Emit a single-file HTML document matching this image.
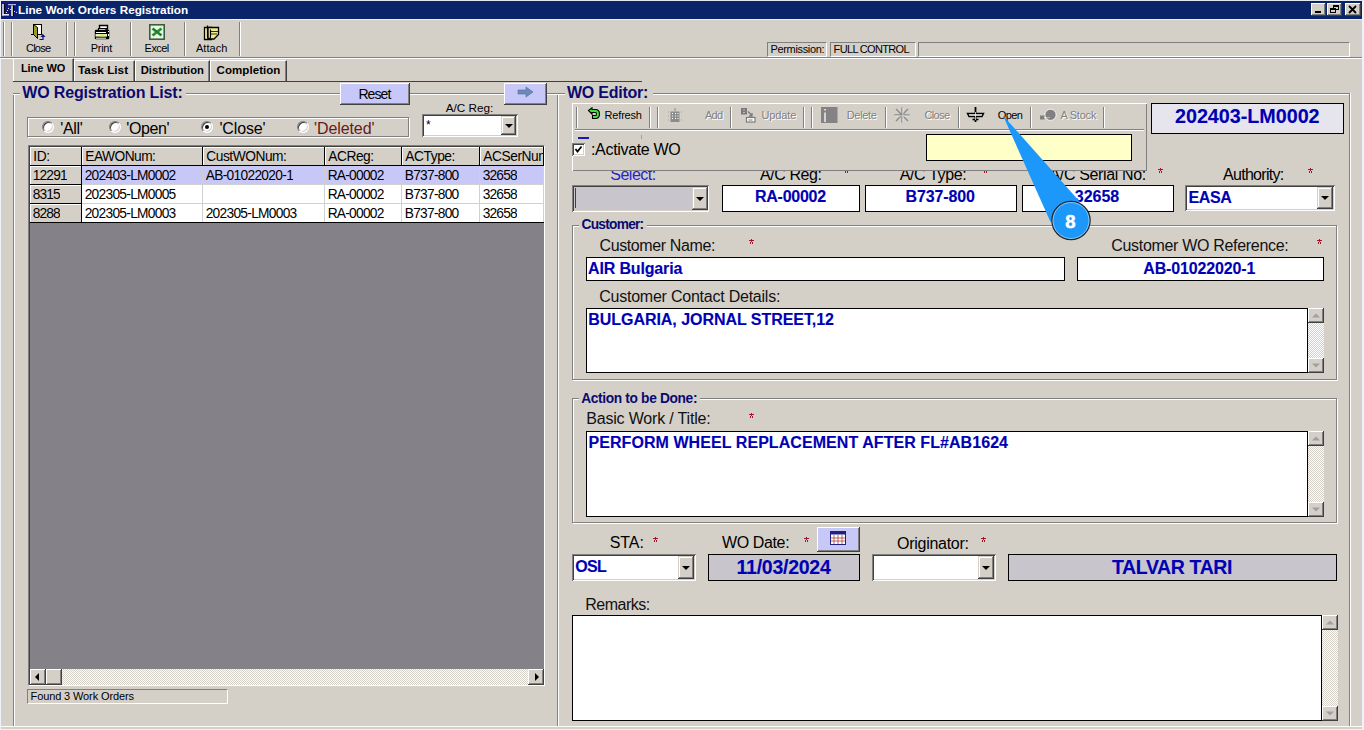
<!DOCTYPE html>
<html><head><meta charset="utf-8"><style>
*{box-sizing:border-box;margin:0;padding:0}
html,body{width:1364px;height:730px;overflow:hidden;background:#D4D0C8;font-family:"Liberation Sans",sans-serif;font-size:12px;color:#000;position:relative}
.a{position:absolute}
.t{position:absolute;white-space:nowrap;line-height:1}
.sk1{border-top:1px solid #808080;border-left:1px solid #808080;border-bottom:1px solid #fff;border-right:1px solid #fff}
.sk2{box-shadow:inset 1px 1px #808080,inset -1px -1px #fff,inset 2px 2px #404040,inset -2px -2px #D4D0C8}
.rz{box-shadow:inset -1px -1px #404040,inset 1px 1px #fff,inset -2px -2px #808080}
.rz1{box-shadow:inset -1px -1px #808080,inset 1px 1px #fff}
.flat{border:1px solid #000;background:#fff}
.grp{position:absolute;border:1px solid #808080;box-shadow:1px 1px #fff,inset 1px 1px #fff}
.vs{position:absolute;width:2px;border-left:1px solid #808080;border-right:1px solid #fff}
.hs{position:absolute;height:2px;border-top:1px solid #808080;border-bottom:1px solid #fff}
.dd{position:absolute;background:#D4D0C8;box-shadow:inset -1px -1px #404040,inset 1px 1px #D4D0C8,inset -2px -2px #808080,inset 2px 2px #fff}
.dd:after{content:"";position:absolute;left:50%;top:50%;margin-left:-4px;margin-top:-2px;border-left:4px solid transparent;border-right:4px solid transparent;border-top:4px solid #000}
.gh{position:absolute;background:#D4D0C8;box-shadow:inset -1px -1px #404040,inset 1px 1px #fff}
.gc{position:absolute;background:#fff;border-right:1px solid #C8C8C8;border-bottom:1px solid #C8C8C8}
.trk{background-color:#F0EEEA;background-image:repeating-conic-gradient(#D4D0C8 0 25%,#fff 0 50%);background-size:2px 2px}

</style></head><body>
<div class="a " style="left:0px;top:0px;width:1364px;height:730px;background:#D4D0C8"></div>
<div class="a " style="left:0px;top:0px;width:1px;height:730px;background:#EEF2FA"></div>
<div class="a " style="left:1362px;top:0px;width:2px;height:730px;background:#EEF2FA"></div>
<div class="a " style="left:1px;top:726px;width:1361px;height:1px;background:#FCFCF8"></div>
<div class="a " style="left:0px;top:729px;width:1364px;height:1px;background:#EEF2FA"></div>
<div class="a " style="left:0px;top:0px;width:1364px;height:1px;background:#E4E8F0"></div>
<div class="a " style="left:1px;top:1px;width:1361px;height:18px;background:#0A246A"></div>
<div class="a " style="left:1px;top:19px;width:1361px;height:1px;background:#F0F0F0"></div>
<div class="a " style="left:1311px;top:3px;width:15px;height:13px;background:#D4D0C8;box-shadow:inset -1px -1px #404040,inset 1px 1px #fff,inset -2px -2px #808080"></div>
<div class="a " style="left:1327px;top:3px;width:15px;height:13px;background:#D4D0C8;box-shadow:inset -1px -1px #404040,inset 1px 1px #fff,inset -2px -2px #808080"></div>
<div class="a " style="left:1345px;top:3px;width:16px;height:13px;background:#D4D0C8;box-shadow:inset -1px -1px #404040,inset 1px 1px #fff,inset -2px -2px #808080"></div>
<div class="a " style="left:1315px;top:11px;width:6px;height:2px;background:#000"></div>
<div class="a " style="left:1333px;top:5px;width:6px;height:5px;border:1px solid #000;border-top-width:2px"></div>
<div class="a " style="left:1330px;top:8px;width:6px;height:5px;border:1px solid #000;border-top-width:2px;background:#D4D0C8"></div>
<svg class="a" style="left:1348px;top:5px" width="10" height="9"><path d="M1 1L8 8M8 1L1 8" stroke="#000" stroke-width="1.8"/></svg>
<svg class="a" style="left:0;top:0" width="18" height="19"><rect x="1" y="1" width="17" height="17.5" fill="#0E1C80"/><rect x="2.2" y="4" width="1.7" height="11.5" fill="#E8E4F4"/><rect x="2.2" y="14" width="6.8" height="1.6" fill="#E8E4F4"/><rect x="3.9" y="4" width="0.9" height="10" fill="#000"/><rect x="8" y="4" width="8" height="1.2" fill="#B0B4E8"/><rect x="11" y="5.5" width="2" height="10.5" fill="#C8C090"/><rect x="13" y="5.5" width="0.9" height="10.5" fill="#000"/><g fill="#fff"><circle cx="8.5" cy="8.3" r="0.6"/><circle cx="7.5" cy="10.5" r="0.6"/><circle cx="6.5" cy="12.5" r="0.6"/><circle cx="10.5" cy="9.5" r="0.6"/><circle cx="14.5" cy="11.5" r="0.6"/><circle cx="16.5" cy="12.3" r="0.6"/></g></svg>
<div class="vs" style="left:3px;top:22px;height:34px;border-left-color:#808080"></div>
<div class="vs" style="left:11px;top:22px;height:34px;border-left-color:#808080"></div>
<div class="vs" style="left:66px;top:22px;height:34px;border-left-color:#808080"></div>
<div class="vs" style="left:74px;top:22px;height:34px;border-left-color:#808080"></div>
<div class="vs" style="left:130px;top:22px;height:34px;border-left-color:#808080"></div>
<div class="vs" style="left:184px;top:22px;height:34px;border-left-color:#808080"></div>
<div class="vs" style="left:239px;top:22px;height:34px;border-left-color:#808080"></div>
<div class="a " style="left:0px;top:57px;width:1362px;height:1px;background:#808080"></div>
<div class="a " style="left:0px;top:58px;width:1362px;height:1px;background:#fff"></div>
<svg class="a" style="left:28px;top:20px" width="30" height="22"><rect x="5.5" y="4.5" width="8" height="10" fill="#fff" stroke="#000"/><path d="M5.5 4.5L9.5 7.5V18.5L5.5 14.5Z" fill="#9A9A2A" stroke="#000"/><path d="M3 14.5H6M9 14.5H14.5" stroke="#000"/><path d="M12.5 17L15 14L17.5 17Z" fill="#10108A"/><path d="M15 16.5V19.5H11.5" stroke="#10108A" stroke-width="1.2" fill="none"/></svg>
<svg class="a" style="left:88px;top:20px" width="30" height="22"><path d="M11.5 5.5H19.5V9H11.5Z" fill="#fff" stroke="#000" stroke-width="1.4"/><path d="M10.5 8.5H18.5L17.5 11H10.5Z" fill="#fff" stroke="#000" stroke-width="1.2"/><rect x="6.8" y="9.8" width="14.5" height="9.5" rx="1.2" fill="#000"/><path d="M8 12.5H18M8 18.2H18" stroke="#fff" stroke-width="1"/><rect x="7.5" y="14" width="11.5" height="2.6" fill="#E8F0C0"/><rect x="12" y="14.4" width="5" height="2" fill="#D8F040"/><rect x="20" y="11" width="1" height="1" fill="#fff"/><rect x="20" y="14" width="1" height="2" fill="#fff"/></svg>
<svg class="a" style="left:142px;top:20px" width="30" height="22"><rect x="7.8" y="4.8" width="14.4" height="14.4" fill="#E4F8E4" stroke="#3C5C3C" stroke-width="1.6"/><path d="M10.5 8.5L19.5 15.5M19.5 8.5L10.5 15.5" stroke="#2A8A3A" stroke-width="2.8"/><path d="M11 8.5L19 15" stroke="#1A6A2A" stroke-width="1"/></svg>
<svg class="a" style="left:197px;top:20px" width="30" height="22"><path d="M7.5 7.5H14.5V19.5H7.5Z" fill="#F4F0A8" stroke="#000" stroke-width="1.3"/><path d="M11 7.5H21.5V14.5L17 19H11Z" fill="#F0EC90" stroke="#000" stroke-width="1.3"/><path d="M14 11.5H21M14 14H20" stroke="#000" stroke-width="0.8"/><path d="M10.5 5.5V17Q10.5 18.5 12 18.5Q13.5 18.5 13.5 17V9.5" stroke="#000" stroke-width="1.2" fill="none"/></svg>
<div class="a sk1" style="left:767px;top:42px;width:60px;height:15px;"></div>
<div class="a sk1" style="left:830px;top:42px;width:86px;height:15px;"></div>
<div class="a sk1" style="left:918px;top:42px;width:432px;height:15px;"></div>
<div class="a " style="left:74px;top:60px;width:61px;height:21px;border-top:1px solid #fff;border-left:1px solid #fff;border-right:1px solid #404040;box-shadow:inset -1px 0 #808080"></div>
<div class="a " style="left:135px;top:60px;width:75px;height:21px;border-top:1px solid #fff;border-left:1px solid #fff;border-right:1px solid #404040;box-shadow:inset -1px 0 #808080"></div>
<div class="a " style="left:210px;top:60px;width:77px;height:21px;border-top:1px solid #fff;border-left:1px solid #fff;border-right:1px solid #404040;box-shadow:inset -1px 0 #808080"></div>
<div class="a " style="left:13px;top:58px;width:61px;height:24px;background:#D4D0C8;border-top:1px solid #fff;border-left:1px solid #fff;border-right:1px solid #404040;box-shadow:inset -1px 0 #808080"></div>
<div class="a " style="left:13px;top:81px;width:629px;height:1px;background:#404040"></div>
<div class="a " style="left:13px;top:93px;width:2px;height:633px;border-left:1px solid #808080;border-right:1px solid #fff"></div>
<div class="a " style="left:13px;top:93px;width:545px;height:2px;border-top:1px solid #808080;border-bottom:1px solid #fff"></div>
<div class="a " style="left:557px;top:93px;width:2px;height:633px;border-left:1px solid #808080;border-right:1px solid #fff"></div>
<div class="a " style="left:20px;top:84px;width:166px;height:16px;background:#D4D0C8"></div>
<div class="a " style="left:340px;top:83px;width:70px;height:22px;background:#C8C8F8;box-shadow:inset -1px -1px #404040,inset 1px 1px #fff,inset -2px -2px #808080"></div>
<div class="a " style="left:504px;top:83px;width:43px;height:22px;background:#C8C8F8;box-shadow:inset -1px -1px #404040,inset 1px 1px #fff,inset -2px -2px #808080"></div>
<svg class="a" style="left:517px;top:86px" width="18" height="12"><path d="M1 4H9V1L16 6L9 11V8H1Z" fill="#6A8AB8" stroke="#50709A" stroke-width="0.6"/></svg>
<div class="a " style="left:27px;top:117px;width:383px;height:21px;border-top:1px solid #808080;border-left:1px solid #808080;border-bottom:1px solid #fff;border-right:1px solid #fff;box-shadow:inset -1px -1px #808080,inset 1px 1px #fff"></div>
<div class="a" style="left:42px;top:121px;width:12px;height:12px;border-radius:50%;background:#fff;border-top:1px solid #808080;border-left:1px solid #808080;border-bottom:1px solid #fff;border-right:1px solid #fff;box-shadow:inset 1px 1px #404040,inset -1px -1px #D4D0C8"></div>
<div class="a" style="left:108.7px;top:121px;width:12px;height:12px;border-radius:50%;background:#fff;border-top:1px solid #808080;border-left:1px solid #808080;border-bottom:1px solid #fff;border-right:1px solid #fff;box-shadow:inset 1px 1px #404040,inset -1px -1px #D4D0C8"></div>
<div class="a" style="left:201.3px;top:121px;width:12px;height:12px;border-radius:50%;background:#fff;border-top:1px solid #808080;border-left:1px solid #808080;border-bottom:1px solid #fff;border-right:1px solid #fff;box-shadow:inset 1px 1px #404040,inset -1px -1px #D4D0C8"></div>
<div class="a" style="left:296.5px;top:121px;width:12px;height:12px;border-radius:50%;background:#fff;border-top:1px solid #808080;border-left:1px solid #808080;border-bottom:1px solid #fff;border-right:1px solid #fff;box-shadow:inset 1px 1px #404040,inset -1px -1px #D4D0C8"></div>
<div class="a" style="left:205.3px;top:125px;width:4px;height:4px;border-radius:50%;background:#000"></div>
<div class="a " style="left:422px;top:114px;width:96px;height:23px;background:#fff;box-shadow:inset 1px 1px #808080,inset -1px -1px #fff,inset 2px 2px #404040,inset -2px -2px #D4D0C8"></div>
<div class="dd" style="left:501px;top:116px;width:15px;height:19px"></div>
<div class="a " style="left:28px;top:145px;width:517px;height:541px;background:#848288;border-top:1px solid #808080;border-left:1px solid #808080;border-right:1px solid #fff;border-bottom:1px solid #fff;box-shadow:inset 1px 1px #404040"></div>
<div class="a " style="left:30px;top:147px;width:52px;height:19px;background:#D4D0C8;border-bottom:1px solid #000;border-right:1px solid #000;box-shadow:inset 1px 1px #fff"></div>
<div class="a " style="left:82px;top:147px;width:121px;height:19px;background:#D4D0C8;border-bottom:1px solid #000;border-right:1px solid #000;box-shadow:inset 1px 1px #fff"></div>
<div class="a " style="left:203px;top:147px;width:122px;height:19px;background:#D4D0C8;border-bottom:1px solid #000;border-right:1px solid #000;box-shadow:inset 1px 1px #fff"></div>
<div class="a " style="left:325px;top:147px;width:77px;height:19px;background:#D4D0C8;border-bottom:1px solid #000;border-right:1px solid #000;box-shadow:inset 1px 1px #fff"></div>
<div class="a " style="left:402px;top:147px;width:78px;height:19px;background:#D4D0C8;border-bottom:1px solid #000;border-right:1px solid #000;box-shadow:inset 1px 1px #fff"></div>
<div class="a " style="left:480px;top:147px;width:64px;height:19px;background:#D4D0C8;border-bottom:1px solid #000;border-right:1px solid #000;box-shadow:inset 1px 1px #fff"></div>
<div class="a " style="left:30px;top:166px;width:52px;height:19px;background:#D4D0C8;border-bottom:1px solid #000;border-right:1px solid #000;box-shadow:inset 1px 1px #fff"></div>
<div class="a " style="left:82px;top:166px;width:121px;height:19px;background:#C8C8F8;border-right:1px solid #D0D0D0;border-bottom:1px solid #D0D0D0"></div>
<div class="a " style="left:203px;top:166px;width:122px;height:19px;background:#C8C8F8;border-right:1px solid #D0D0D0;border-bottom:1px solid #D0D0D0"></div>
<div class="a " style="left:325px;top:166px;width:77px;height:19px;background:#C8C8F8;border-right:1px solid #D0D0D0;border-bottom:1px solid #D0D0D0"></div>
<div class="a " style="left:402px;top:166px;width:78px;height:19px;background:#C8C8F8;border-right:1px solid #D0D0D0;border-bottom:1px solid #D0D0D0"></div>
<div class="a " style="left:480px;top:166px;width:64px;height:19px;background:#C8C8F8;border-right:1px solid #D0D0D0;border-bottom:1px solid #D0D0D0"></div>
<div class="a " style="left:30px;top:185px;width:52px;height:19px;background:#D4D0C8;border-bottom:1px solid #000;border-right:1px solid #000;box-shadow:inset 1px 1px #fff"></div>
<div class="a " style="left:82px;top:185px;width:121px;height:19px;background:#fff;border-right:1px solid #D0D0D0;border-bottom:1px solid #D0D0D0"></div>
<div class="a " style="left:203px;top:185px;width:122px;height:19px;background:#fff;border-right:1px solid #D0D0D0;border-bottom:1px solid #D0D0D0"></div>
<div class="a " style="left:325px;top:185px;width:77px;height:19px;background:#fff;border-right:1px solid #D0D0D0;border-bottom:1px solid #D0D0D0"></div>
<div class="a " style="left:402px;top:185px;width:78px;height:19px;background:#fff;border-right:1px solid #D0D0D0;border-bottom:1px solid #D0D0D0"></div>
<div class="a " style="left:480px;top:185px;width:64px;height:19px;background:#fff;border-right:1px solid #D0D0D0;border-bottom:1px solid #D0D0D0"></div>
<div class="a " style="left:30px;top:204px;width:52px;height:19px;background:#D4D0C8;border-bottom:1px solid #000;border-right:1px solid #000;box-shadow:inset 1px 1px #fff"></div>
<div class="a " style="left:82px;top:204px;width:121px;height:19px;background:#fff;border-right:1px solid #D0D0D0;border-bottom:1px solid #D0D0D0"></div>
<div class="a " style="left:203px;top:204px;width:122px;height:19px;background:#fff;border-right:1px solid #D0D0D0;border-bottom:1px solid #D0D0D0"></div>
<div class="a " style="left:325px;top:204px;width:77px;height:19px;background:#fff;border-right:1px solid #D0D0D0;border-bottom:1px solid #D0D0D0"></div>
<div class="a " style="left:402px;top:204px;width:78px;height:19px;background:#fff;border-right:1px solid #D0D0D0;border-bottom:1px solid #D0D0D0"></div>
<div class="a " style="left:480px;top:204px;width:64px;height:19px;background:#fff;border-right:1px solid #D0D0D0;border-bottom:1px solid #D0D0D0"></div>
<div class="a " style="left:30px;top:222px;width:514px;height:1px;background:#000"></div>
<div class="a trk" style="left:30px;top:669px;width:514px;height:16px;"></div>
<div class="a " style="left:30px;top:669px;width:16px;height:16px;background:#D4D0C8;box-shadow:inset -1px -1px #404040,inset 1px 1px #fff,inset -2px -2px #808080"></div>
<div class="a " style="left:46px;top:669px;width:16px;height:16px;background:#D4D0C8;box-shadow:inset -1px -1px #404040,inset 1px 1px #fff,inset -2px -2px #808080"></div>
<div class="a " style="left:528px;top:669px;width:16px;height:16px;background:#D4D0C8;box-shadow:inset -1px -1px #404040,inset 1px 1px #fff,inset -2px -2px #808080"></div>
<svg class="a" style="left:34px;top:673px" width="8" height="8"><path d="M5 0L1 4L5 8Z" fill="#000"/></svg>
<svg class="a" style="left:533px;top:673px" width="8" height="8"><path d="M2 0L6 4L2 8Z" fill="#000"/></svg>
<div class="a sk1" style="left:27px;top:689px;width:201px;height:15px;"></div>
<div class="a " style="left:557px;top:93px;width:793px;height:2px;border-top:1px solid #808080;border-bottom:1px solid #fff"></div>
<div class="a " style="left:1349px;top:93px;width:2px;height:633px;border-left:1px solid #808080;border-right:1px solid #fff"></div>
<div class="a " style="left:565px;top:84px;width:88px;height:16px;background:#D4D0C8"></div>
<svg class="a" style="left:844px;top:168px" width="5" height="5" shape-rendering="crispEdges"><g fill="#A8142A"><rect x="2" y="0" width="1" height="3"/><rect x="0" y="1" width="5" height="1"/><rect x="1" y="3" width="1" height="2"/><rect x="3" y="3" width="1" height="2"/></g></svg>
<svg class="a" style="left:983px;top:168px" width="5" height="5" shape-rendering="crispEdges"><g fill="#A8142A"><rect x="2" y="0" width="1" height="3"/><rect x="0" y="1" width="5" height="1"/><rect x="1" y="3" width="1" height="2"/><rect x="3" y="3" width="1" height="2"/></g></svg>
<svg class="a" style="left:1158px;top:168px" width="5" height="5" shape-rendering="crispEdges"><g fill="#A8142A"><rect x="2" y="0" width="1" height="3"/><rect x="0" y="1" width="5" height="1"/><rect x="1" y="3" width="1" height="2"/><rect x="3" y="3" width="1" height="2"/></g></svg>
<svg class="a" style="left:1308px;top:168px" width="5" height="5" shape-rendering="crispEdges"><g fill="#A8142A"><rect x="2" y="0" width="1" height="3"/><rect x="0" y="1" width="5" height="1"/><rect x="1" y="3" width="1" height="2"/><rect x="3" y="3" width="1" height="2"/></g></svg>
<div class="a " style="left:572px;top:103px;width:575px;height:68px;background:#D4D0C8;box-shadow:inset 1px 1px #fff,inset -1px -1px #808080"></div>
<div class="a " style="left:575px;top:129px;width:569px;height:2px;border-top:1px solid #808080;border-bottom:1px solid #fff"></div>
<div class="a " style="left:641px;top:135px;width:1px;height:4px;background:#A0A0A0"></div>
<div class="vs" style="left:576px;top:107px;height:21px"></div>
<div class="vs" style="left:649px;top:107px;height:21px"></div>
<div class="vs" style="left:657px;top:107px;height:21px"></div>
<div class="vs" style="left:730px;top:107px;height:21px"></div>
<div class="vs" style="left:803px;top:107px;height:21px"></div>
<div class="vs" style="left:811px;top:107px;height:21px"></div>
<div class="vs" style="left:885px;top:107px;height:21px"></div>
<div class="vs" style="left:958px;top:107px;height:21px"></div>
<div class="vs" style="left:1030px;top:107px;height:21px"></div>
<div class="vs" style="left:1103px;top:107px;height:21px"></div>
<svg class="a" style="left:586px;top:107px" width="16" height="16"><path d="M2.5 3.5L6 0.8V2.5H9.5Q13.5 2.5 13.5 7Q13.5 11.5 9.5 11.5H6.5V8.5H9.5Q10.5 8.5 10.5 7Q10.5 5.5 9.5 5.5H6V7.2Z" fill="#40E040" stroke="#000" stroke-width="1.1"/></svg>
<svg class="a" style="left:667px;top:107px" width="16" height="17"><path d="M3.5 4.5H12.5V15H3.5Z" fill="#8C8C8C"/><path d="M8 1V4" stroke="#8C8C8C"/><path d="M5 6.5H6M8 6.5H9M10.5 6.5H11.5M5 9H6M8 9H9M10.5 9H11.5M5 11.5H6M8 11.5H9M10.5 11.5H11.5" stroke="#fff" stroke-width="1"/><path d="M1 5H2M1 9H2M1 13H2M14 5H15M14 13H15" stroke="#A0A0A0"/></svg>
<svg class="a" style="left:740px;top:107px" width="18" height="17"><rect x="1" y="1" width="6" height="6.5" fill="#7A7A7A"/><path d="M3.5 3H4.5M3.5 5.5H4.5" stroke="#fff"/><path d="M8 4.5L12 8.5M12 6V9H9" stroke="#7A7A7A" stroke-width="1.3" fill="none"/><rect x="6.5" y="10.5" width="8.5" height="4.5" fill="#fff" stroke="#7A7A7A" stroke-width="1.2"/><path d="M8.5 13H12.5" stroke="#7A7A7A"/></svg>
<svg class="a" style="left:820px;top:107px" width="18" height="17"><rect x="1" y="0" width="16.5" height="16" fill="#848284"/><path d="M5 5.5V15" stroke="#fff" stroke-width="1.3"/><rect x="4.4" y="2" width="1.4" height="1.5" fill="#fff"/></svg>
<svg class="a" style="left:893px;top:106px" width="18" height="18"><path d="M9 1.5V16.5M1.5 9H16.5M3 3L15 15M15 3L3 15" stroke="#8A8A8A" stroke-width="1.4"/><path d="M9.9 2V16M2 9.9H16" stroke="#fff" stroke-width="0.6"/></svg>
<svg class="a" style="left:966px;top:106px" width="19" height="18"><path d="M9.5 1V16" stroke="#000" stroke-width="1.8"/><path d="M1.5 7.5H17.5L16 10.5H3Z" fill="#fff" stroke="#000" stroke-width="1.4"/><path d="M6.5 13.5H12.5" stroke="#000" stroke-width="1.6"/><path d="M9.5 6V14" stroke="#fff" stroke-width="0.7"/></svg>
<svg class="a" style="left:1039px;top:107px" width="19" height="15"><circle cx="11.5" cy="7.8" r="5.6" fill="#808080" stroke="#fff" stroke-width="0.8"/><rect x="1" y="8.5" width="4.5" height="4" fill="#808080"/><path d="M5.5 10.5H11" stroke="#fff" stroke-width="0.9" stroke-dasharray="1 1"/></svg>
<div class="a " style="left:578px;top:137px;width:11px;height:2px;background:#1A1AB0"></div>
<div class="a " style="left:572px;top:143px;width:13px;height:13px;background:#fff;box-shadow:inset 1px 1px #808080,inset -1px -1px #fff,inset 2px 2px #404040,inset -2px -2px #D4D0C8"></div>
<svg class="a" style="left:574px;top:145px" width="9" height="9"><path d="M1.5 4L3.5 6.5L7.5 1.5" stroke="#000" stroke-width="1.8" fill="none"/></svg>
<div class="a " style="left:926px;top:134px;width:206px;height:27px;background:#FFFFC8;border:1px solid #000"></div>
<div class="a " style="left:1151px;top:103px;width:193px;height:31px;background:#E6E4EC;border:1px solid #000"></div>
<div class="a " style="left:572px;top:185px;width:137px;height:27px;background:#C8C6CC;box-shadow:inset 1px 1px #808080,inset -1px -1px #fff,inset 2px 2px #404040,inset -2px -2px #D4D0C8"></div>
<div class="a " style="left:575px;top:188px;width:1px;height:20px;background:#404040"></div>
<div class="dd" style="left:692px;top:187px;width:16px;height:23px"></div>
<div class="a " style="left:722px;top:185px;width:138px;height:27px;background:#fff;border:1px solid #000"></div>
<div class="a " style="left:865px;top:185px;width:152px;height:27px;background:#fff;border:1px solid #000"></div>
<div class="a " style="left:1022px;top:185px;width:152px;height:27px;background:#fff;border:1px solid #000"></div>
<div class="a " style="left:1185px;top:185px;width:150px;height:26px;background:#fff;box-shadow:inset 1px 1px #808080,inset -1px -1px #fff,inset 2px 2px #404040,inset -2px -2px #D4D0C8"></div>
<div class="dd" style="left:1317px;top:187px;width:16px;height:22px"></div>
<div class="a " style="left:572px;top:225px;width:765px;height:155px;border:1px solid #808080;box-shadow:1px 1px #fff,inset 1px 1px #fff"></div>
<div class="a " style="left:579px;top:219px;width:68px;height:12px;background:#D4D0C8"></div>
<svg class="a" style="left:749px;top:239px" width="5" height="5" shape-rendering="crispEdges"><g fill="#A8142A"><rect x="2" y="0" width="1" height="3"/><rect x="0" y="1" width="5" height="1"/><rect x="1" y="3" width="1" height="2"/><rect x="3" y="3" width="1" height="2"/></g></svg>
<div class="a " style="left:586px;top:257px;width:479px;height:24px;background:#fff;border:1px solid #000"></div>
<svg class="a" style="left:1317px;top:239px" width="5" height="5" shape-rendering="crispEdges"><g fill="#A8142A"><rect x="2" y="0" width="1" height="3"/><rect x="0" y="1" width="5" height="1"/><rect x="1" y="3" width="1" height="2"/><rect x="3" y="3" width="1" height="2"/></g></svg>
<div class="a " style="left:1077px;top:257px;width:247px;height:24px;background:#fff;border:1px solid #000"></div>
<div class="a " style="left:586px;top:308px;width:722px;height:65px;background:#fff;border:1px solid #000"></div>
<div class="a trk" style="left:1308px;top:308px;width:16px;height:65px;"></div>
<div class="a " style="left:1308px;top:308px;width:16px;height:15px;background:#D4D0C8;box-shadow:inset -1px -1px #404040,inset 1px 1px #fff,inset -2px -2px #808080"></div>
<div class="a " style="left:1308px;top:358px;width:16px;height:15px;background:#D4D0C8;box-shadow:inset -1px -1px #404040,inset 1px 1px #fff,inset -2px -2px #808080"></div>
<svg class="a" style="left:1312px;top:313px" width="8" height="5"><path d="M0 4.5L4 0.5L8 4.5Z" fill="#A0A0A0"/></svg>
<svg class="a" style="left:1312px;top:363px" width="8" height="5"><path d="M0 0.5L4 4.5L8 0.5Z" fill="#A0A0A0"/></svg>
<div class="a " style="left:572px;top:398px;width:765px;height:125px;border:1px solid #808080;box-shadow:1px 1px #fff,inset 1px 1px #fff"></div>
<div class="a " style="left:579px;top:392px;width:121px;height:12px;background:#D4D0C8"></div>
<svg class="a" style="left:749px;top:413px" width="5" height="5" shape-rendering="crispEdges"><g fill="#A8142A"><rect x="2" y="0" width="1" height="3"/><rect x="0" y="1" width="5" height="1"/><rect x="1" y="3" width="1" height="2"/><rect x="3" y="3" width="1" height="2"/></g></svg>
<div class="a " style="left:586px;top:431px;width:722px;height:86px;background:#fff;border:1px solid #000"></div>
<div class="a trk" style="left:1308px;top:431px;width:16px;height:86px;"></div>
<div class="a " style="left:1308px;top:431px;width:16px;height:15px;background:#D4D0C8;box-shadow:inset -1px -1px #404040,inset 1px 1px #fff,inset -2px -2px #808080"></div>
<div class="a " style="left:1308px;top:502px;width:16px;height:15px;background:#D4D0C8;box-shadow:inset -1px -1px #404040,inset 1px 1px #fff,inset -2px -2px #808080"></div>
<svg class="a" style="left:1312px;top:436px" width="8" height="5"><path d="M0 4.5L4 0.5L8 4.5Z" fill="#A0A0A0"/></svg>
<svg class="a" style="left:1312px;top:507px" width="8" height="5"><path d="M0 0.5L4 4.5L8 0.5Z" fill="#A0A0A0"/></svg>
<svg class="a" style="left:653px;top:537px" width="5" height="5" shape-rendering="crispEdges"><g fill="#A8142A"><rect x="2" y="0" width="1" height="3"/><rect x="0" y="1" width="5" height="1"/><rect x="1" y="3" width="1" height="2"/><rect x="3" y="3" width="1" height="2"/></g></svg>
<svg class="a" style="left:804px;top:537px" width="5" height="5" shape-rendering="crispEdges"><g fill="#A8142A"><rect x="2" y="0" width="1" height="3"/><rect x="0" y="1" width="5" height="1"/><rect x="1" y="3" width="1" height="2"/><rect x="3" y="3" width="1" height="2"/></g></svg>
<svg class="a" style="left:981px;top:537px" width="5" height="5" shape-rendering="crispEdges"><g fill="#A8142A"><rect x="2" y="0" width="1" height="3"/><rect x="0" y="1" width="5" height="1"/><rect x="1" y="3" width="1" height="2"/><rect x="3" y="3" width="1" height="2"/></g></svg>
<div class="a " style="left:817px;top:527px;width:43px;height:25px;background:#C8C8F8;box-shadow:inset -1px -1px #404040,inset 1px 1px #fff,inset -2px -2px #808080"></div>
<svg class="a" style="left:830px;top:530px" width="17" height="16"><rect x="0.5" y="1.5" width="15" height="13" fill="#fff" stroke="#202080"/><rect x="0.5" y="1.5" width="15" height="3" fill="#202080"/><path d="M4 5V14M8 5V14M12 5V14M1 8H15M1 11H15" stroke="#B04040" stroke-width="0.8"/></svg>
<div class="a " style="left:572px;top:554px;width:124px;height:27px;background:#fff;box-shadow:inset 1px 1px #808080,inset -1px -1px #fff,inset 2px 2px #404040,inset -2px -2px #D4D0C8"></div>
<div class="dd" style="left:678px;top:556px;width:16px;height:23px"></div>
<div class="a " style="left:708px;top:554px;width:152px;height:27px;background:#C8C6CC;border:1px solid #000"></div>
<div class="a " style="left:872px;top:554px;width:124px;height:27px;background:#fff;box-shadow:inset 1px 1px #808080,inset -1px -1px #fff,inset 2px 2px #404040,inset -2px -2px #D4D0C8"></div>
<div class="dd" style="left:978px;top:556px;width:16px;height:23px"></div>
<div class="a " style="left:1008px;top:554px;width:329px;height:27px;background:#C8C6CC;border:1px solid #000"></div>
<div class="a " style="left:572px;top:615px;width:750px;height:106px;background:#fff;border:1px solid #000"></div>
<div class="a trk" style="left:1322px;top:615px;width:16px;height:106px;"></div>
<div class="a " style="left:1322px;top:615px;width:16px;height:15px;background:#D4D0C8;box-shadow:inset -1px -1px #404040,inset 1px 1px #fff,inset -2px -2px #808080"></div>
<div class="a " style="left:1322px;top:706px;width:16px;height:15px;background:#D4D0C8;box-shadow:inset -1px -1px #404040,inset 1px 1px #fff,inset -2px -2px #808080"></div>
<svg class="a" style="left:1326px;top:620px" width="8" height="5"><path d="M0 4.5L4 0.5L8 4.5Z" fill="#A0A0A0"/></svg>
<svg class="a" style="left:1326px;top:711px" width="8" height="5"><path d="M0 0.5L4 4.5L8 0.5Z" fill="#A0A0A0"/></svg>
<div class="t" style="left:18.0px;top:4px;font-size:11.75px;font-weight:bold;color:#fff;">Line Work Orders Registration</div>
<div class="t" style="left:26.0px;top:43px;font-size:11.0px;font-weight:normal;color:#000;letter-spacing:-0.781px;">Close</div>
<div class="t" style="left:90.7px;top:43px;font-size:11.0px;font-weight:normal;color:#000;letter-spacing:-0.281px;">Print</div>
<div class="t" style="left:144.6px;top:43px;font-size:11.0px;font-weight:normal;color:#000;letter-spacing:-0.552px;">Excel</div>
<div class="t" style="left:196.0px;top:43px;font-size:11.0px;font-weight:normal;color:#000;letter-spacing:0.023px;">Attach</div>
<div class="t" style="left:770.5px;top:44px;font-size:11.0px;font-weight:normal;color:#000;letter-spacing:-0.347px;">Permission:</div>
<div class="t" style="left:833.6px;top:44px;font-size:11.0px;font-weight:normal;color:#000;letter-spacing:-0.666px;">FULL CONTROL</div>
<div class="t" style="left:20.9px;top:63px;font-size:11.0px;font-weight:bold;color:#000;letter-spacing:-0.035px;">Line WO</div>
<div class="t" style="left:78.0px;top:64px;font-size:11.75px;font-weight:bold;color:#000;">Task List</div>
<div class="t" style="left:140.7px;top:65px;font-size:11.25px;font-weight:bold;color:#000;letter-spacing:0.016px;">Distribution</div>
<div class="t" style="left:216.6px;top:65px;font-size:11.5px;font-weight:bold;color:#000;letter-spacing:0.061px;">Completion</div>
<div class="t" style="left:22.2px;top:85px;font-size:16.0px;font-weight:bold;color:#0A0A70;letter-spacing:-0.148px;">WO Registration List:</div>
<div class="t" style="left:358.4px;top:87px;font-size:14.0px;font-weight:normal;color:#000;letter-spacing:-0.895px;">Reset</div>
<div class="t" style="left:60.3px;top:121px;font-size:16.0px;font-weight:normal;color:#000;letter-spacing:-0.348px;">'All'</div>
<div class="t" style="left:126.3px;top:121px;font-size:16.0px;font-weight:normal;color:#000;letter-spacing:-0.390px;">'Open'</div>
<div class="t" style="left:219.4px;top:121px;font-size:16.0px;font-weight:normal;color:#000;letter-spacing:-0.136px;">'Close'</div>
<div class="t" style="left:314.1px;top:121px;font-size:16.0px;font-weight:normal;color:#6A1818;letter-spacing:-0.108px;">'Deleted'</div>
<div class="t" style="left:445.8px;top:102px;font-size:11.75px;font-weight:normal;color:#000;letter-spacing:-0.025px;">A/C Reg:</div>
<div class="t" style="left:426.0px;top:119px;font-size:12.0px;font-weight:normal;color:#000;">*</div>
<div class="t" style="left:33.3px;top:150px;font-size:13.75px;font-weight:normal;color:#000;letter-spacing:-0.437px;max-width:48px;overflow:hidden">ID:</div>
<div class="t" style="left:85.3px;top:150px;font-size:13.75px;font-weight:normal;color:#000;letter-spacing:-0.530px;max-width:117px;overflow:hidden">EAWONum:</div>
<div class="t" style="left:206.3px;top:150px;font-size:13.75px;font-weight:normal;color:#000;letter-spacing:-0.470px;max-width:118px;overflow:hidden">CustWONum:</div>
<div class="t" style="left:328.3px;top:150px;font-size:13.75px;font-weight:normal;color:#000;letter-spacing:-0.481px;max-width:73px;overflow:hidden">ACReg:</div>
<div class="t" style="left:405.3px;top:150px;font-size:13.75px;font-weight:normal;color:#000;letter-spacing:-0.440px;max-width:74px;overflow:hidden">ACType:</div>
<div class="t" style="left:483.3px;top:150px;font-size:13.75px;font-weight:normal;color:#000;letter-spacing:-0.459px;max-width:60px;overflow:hidden">ACSerNum:</div>
<div class="t" style="left:32.7px;top:169px;font-size:13.75px;font-weight:normal;color:#000;letter-spacing:-0.819px;max-width:48px;overflow:hidden">12291</div>
<div class="t" style="left:84.7px;top:169px;font-size:13.75px;font-weight:normal;color:#000;letter-spacing:-0.714px;max-width:117px;overflow:hidden">202403-LM0002</div>
<div class="t" style="left:205.7px;top:169px;font-size:13.75px;font-weight:normal;color:#000;letter-spacing:-0.685px;max-width:118px;overflow:hidden">AB-01022020-1</div>
<div class="t" style="left:327.7px;top:169px;font-size:13.75px;font-weight:normal;color:#000;letter-spacing:-0.755px;max-width:73px;overflow:hidden">RA-00002</div>
<div class="t" style="left:404.7px;top:169px;font-size:13.75px;font-weight:normal;color:#000;letter-spacing:-0.728px;max-width:74px;overflow:hidden">B737-800</div>
<div class="t" style="left:482.7px;top:169px;font-size:13.75px;font-weight:normal;color:#000;letter-spacing:-0.819px;max-width:60px;overflow:hidden">32658</div>
<div class="t" style="left:32.7px;top:188px;font-size:13.75px;font-weight:normal;color:#000;letter-spacing:-0.871px;max-width:48px;overflow:hidden">8315</div>
<div class="t" style="left:84.7px;top:188px;font-size:13.75px;font-weight:normal;color:#000;letter-spacing:-0.714px;max-width:117px;overflow:hidden">202305-LM0005</div>
<div class="t" style="left:327.7px;top:188px;font-size:13.75px;font-weight:normal;color:#000;letter-spacing:-0.755px;max-width:73px;overflow:hidden">RA-00002</div>
<div class="t" style="left:404.7px;top:188px;font-size:13.75px;font-weight:normal;color:#000;letter-spacing:-0.728px;max-width:74px;overflow:hidden">B737-800</div>
<div class="t" style="left:482.7px;top:188px;font-size:13.75px;font-weight:normal;color:#000;letter-spacing:-0.819px;max-width:60px;overflow:hidden">32658</div>
<div class="t" style="left:32.7px;top:207px;font-size:13.75px;font-weight:normal;color:#000;letter-spacing:-0.871px;max-width:48px;overflow:hidden">8288</div>
<div class="t" style="left:84.7px;top:207px;font-size:13.75px;font-weight:normal;color:#000;letter-spacing:-0.714px;max-width:117px;overflow:hidden">202305-LM0003</div>
<div class="t" style="left:205.7px;top:207px;font-size:13.75px;font-weight:normal;color:#000;letter-spacing:-0.714px;max-width:118px;overflow:hidden">202305-LM0003</div>
<div class="t" style="left:327.7px;top:207px;font-size:13.75px;font-weight:normal;color:#000;letter-spacing:-0.755px;max-width:73px;overflow:hidden">RA-00002</div>
<div class="t" style="left:404.7px;top:207px;font-size:13.75px;font-weight:normal;color:#000;letter-spacing:-0.728px;max-width:74px;overflow:hidden">B737-800</div>
<div class="t" style="left:482.7px;top:207px;font-size:13.75px;font-weight:normal;color:#000;letter-spacing:-0.819px;max-width:60px;overflow:hidden">32658</div>
<div class="t" style="left:30.6px;top:691px;font-size:11.0px;font-weight:normal;color:#000;letter-spacing:-0.120px;">Found 3 Work Orders</div>
<div class="t" style="left:567.0px;top:85px;font-size:16.0px;font-weight:bold;color:#0A0A70;letter-spacing:-0.250px;">WO Editor:</div>
<div class="t" style="left:610.3px;top:167px;font-size:16.0px;font-weight:normal;color:#2424C8;letter-spacing:-0.504px;clip-path:inset(4px -4px -4px -4px);">Select:</div>
<div class="t" style="left:760.0px;top:167px;font-size:16.0px;font-weight:normal;color:#000;letter-spacing:-0.417px;clip-path:inset(4px -4px -4px -4px);">A/C Reg:</div>
<div class="t" style="left:899.7px;top:167px;font-size:16.0px;font-weight:normal;color:#000;letter-spacing:-0.359px;clip-path:inset(4px -4px -4px -4px);">A/C Type:</div>
<div class="t" style="left:1049.5px;top:167px;font-size:16.0px;font-weight:normal;color:#000;letter-spacing:-0.352px;clip-path:inset(4px -4px -4px -4px);">A/C Serial No:</div>
<div class="t" style="left:1223.0px;top:167px;font-size:16.0px;font-weight:normal;color:#000;letter-spacing:-0.699px;">Authority:</div>
<div class="t" style="left:604.6px;top:110px;font-size:11.0px;font-weight:normal;color:#000;letter-spacing:-0.189px;">Refresh</div>
<div class="t" style="left:705.0px;top:110px;font-size:11.0px;font-weight:normal;color:#808080;text-shadow:1px 1px #fff;letter-spacing:-0.789px;">Add</div>
<div class="t" style="left:761.4px;top:110px;font-size:11.0px;font-weight:normal;color:#808080;text-shadow:1px 1px #fff;letter-spacing:-0.097px;">Update</div>
<div class="t" style="left:846.7px;top:110px;font-size:11.0px;font-weight:normal;color:#808080;text-shadow:1px 1px #fff;letter-spacing:-0.299px;">Delete</div>
<div class="t" style="left:924.6px;top:110px;font-size:11.0px;font-weight:normal;color:#808080;text-shadow:1px 1px #fff;letter-spacing:-0.681px;">Close</div>
<div class="t" style="left:997.7px;top:110px;font-size:11.0px;font-weight:normal;color:#000;letter-spacing:-0.541px;">Open</div>
<div class="t" style="left:1060.4px;top:110px;font-size:11.0px;font-weight:normal;color:#808080;text-shadow:1px 1px #fff;letter-spacing:-0.216px;">A Stock</div>
<div class="t" style="left:591.0px;top:142px;font-size:16.0px;font-weight:normal;color:#000;letter-spacing:-0.324px;">:Activate WO</div>
<div class="t" style="left:1175.0px;top:107px;font-size:19.75px;font-weight:bold;color:#0000B4;-webkit-text-stroke:0.12px #0000B4;letter-spacing:-0.028px;">202403-LM0002</div>
<div class="t" style="left:754.9px;top:189px;font-size:16.0px;font-weight:bold;color:#0000B4;-webkit-text-stroke:0.12px #0000B4;letter-spacing:-0.234px;">RA-00002</div>
<div class="t" style="left:905.5px;top:189px;font-size:16.0px;font-weight:bold;color:#0000B4;-webkit-text-stroke:0.12px #0000B4;letter-spacing:-0.140px;">B737-800</div>
<div class="t" style="left:1074.8px;top:189px;font-size:16.0px;font-weight:bold;color:#0000B4;-webkit-text-stroke:0.12px #0000B4;letter-spacing:-0.025px;">32658</div>
<div class="t" style="left:1188.6px;top:190px;font-size:16.0px;font-weight:bold;color:#0000B4;-webkit-text-stroke:0.12px #0000B4;letter-spacing:-0.451px;">EASA</div>
<div class="t" style="left:581.5px;top:218px;font-size:13.75px;font-weight:bold;color:#0A0A70;letter-spacing:-0.758px;">Customer:</div>
<div class="t" style="left:599.5px;top:238px;font-size:16.0px;font-weight:normal;color:#111;letter-spacing:-0.386px;">Customer Name:</div>
<div class="t" style="left:588.0px;top:261px;font-size:16.0px;font-weight:bold;color:#0000B4;-webkit-text-stroke:0.12px #0000B4;letter-spacing:-0.147px;">AIR Bulgaria</div>
<div class="t" style="left:1111.3px;top:238px;font-size:16.0px;font-weight:normal;color:#111;letter-spacing:-0.317px;">Customer WO Reference:</div>
<div class="t" style="left:1143.3px;top:261px;font-size:16.0px;font-weight:bold;color:#0000B4;-webkit-text-stroke:0.12px #0000B4;letter-spacing:-0.155px;">AB-01022020-1</div>
<div class="t" style="left:599.2px;top:289px;font-size:16.0px;font-weight:normal;color:#111;letter-spacing:-0.231px;">Customer Contact Details:</div>
<div class="t" style="left:588.3px;top:312px;font-size:16.0px;font-weight:bold;color:#0000B4;-webkit-text-stroke:0.12px #0000B4;letter-spacing:-0.046px;">BULGARIA, JORNAL STREET,12</div>
<div class="t" style="left:581.2px;top:392px;font-size:13.75px;font-weight:bold;color:#0A0A70;letter-spacing:-0.348px;">Action to be Done:</div>
<div class="t" style="left:586.2px;top:411px;font-size:16.0px;font-weight:normal;color:#111;letter-spacing:-0.180px;">Basic Work / Title:</div>
<div class="t" style="left:588.5px;top:435px;font-size:16.0px;font-weight:bold;color:#0000B4;-webkit-text-stroke:0.12px #0000B4;letter-spacing:0.064px;">PERFORM WHEEL REPLACEMENT AFTER FL#AB1624</div>
<div class="t" style="left:609.7px;top:535px;font-size:16.0px;font-weight:normal;color:#000;letter-spacing:-0.058px;">STA:</div>
<div class="t" style="left:721.9px;top:535px;font-size:16.0px;font-weight:normal;color:#000;letter-spacing:-0.362px;">WO Date:</div>
<div class="t" style="left:897.0px;top:536px;font-size:16.0px;font-weight:normal;color:#000;letter-spacing:-0.270px;">Originator:</div>
<div class="t" style="left:575.3px;top:559px;font-size:16.0px;font-weight:bold;color:#0000B4;-webkit-text-stroke:0.12px #0000B4;letter-spacing:-0.695px;">OSL</div>
<div class="t" style="left:736.6px;top:558px;font-size:19.5px;font-weight:bold;color:#0000B4;-webkit-text-stroke:0.12px #0000B4;letter-spacing:-0.259px;">11/03/2024</div>
<div class="t" style="left:1112.0px;top:558px;font-size:19.5px;font-weight:bold;color:#0000B4;-webkit-text-stroke:0.12px #0000B4;letter-spacing:-0.370px;">TALVAR TARI</div>
<div class="t" style="left:585.2px;top:597px;font-size:16.0px;font-weight:normal;color:#111;letter-spacing:-0.479px;">Remarks:</div>
<svg class="a" style="left:0;top:0;position:absolute" width="1364" height="730">
<path d="M1003 115.5L1050.5 222L1080 202Z" fill="#1C98FA"/>
<circle cx="1071" cy="220.5" r="19.1" fill="#1C98FA" stroke="#262626" stroke-width="1.3"/>
<circle cx="1071" cy="220.5" r="18" fill="none" stroke="#E8F4FF" stroke-width="0.7" opacity="0.7"/>
<text x="1070.5" y="228" text-anchor="middle" font-family="Liberation Sans" font-weight="bold" font-size="18.5" fill="#fff" stroke="#fff" stroke-width="0.5">8</text>
</svg></body></html>
